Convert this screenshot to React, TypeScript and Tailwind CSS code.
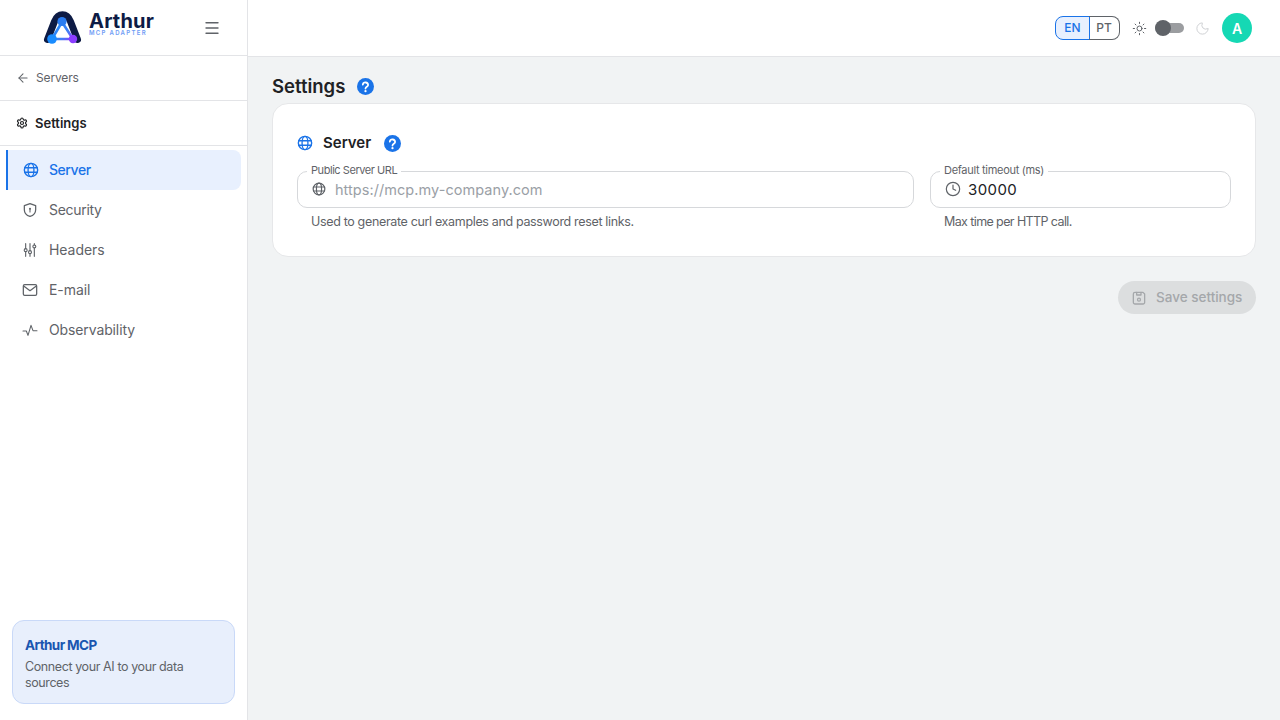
import React from "react";
import { ArrowLeft, Settings, Menu, Sun, Moon, Clock } from "lucide-react";

function Help({ className }: { className: string }) {
  return (
    <svg viewBox="0 0 24 24" className={className} aria-hidden="true">
      <circle cx="12" cy="12" r="12" fill="#1a73e8" />
      <path d="M8.2 9.3a3.8 3.8 0 0 1 7.5.6c0 2.4-3.7 2.7-3.7 5" fill="none" stroke="#fff" strokeWidth="2.5" strokeLinecap="round" />
      <circle cx="12" cy="18.6" r="1.6" fill="#fff" />
    </svg>
  );
}

function Logo() {
  return (
    <svg viewBox="0 0 46 40" className="w-[46px] h-[40px] shrink-0" aria-hidden="true">
      <defs>
        <linearGradient id="tri" gradientUnits="userSpaceOnUse" x1="14" y1="14" x2="33" y2="31">
          <stop offset="0" stopColor="#1a8cff" />
          <stop offset="0.65" stopColor="#3f7ff5" />
          <stop offset="1" stopColor="#8b3dff" />
        </linearGradient>
      </defs>
      <path d="M7.5 31.5 14.500 13.500C17 7.500 19.500 6.800 22.500 6.800s5.500 .7 8 6.700l7 18" fill="none" stroke="#0d1b45" strokeWidth="7" strokeLinecap="round" />
      <path d="M22 14 12 31h21Z" fill="#fff" stroke="url(#tri)" strokeWidth="2.600" strokeLinejoin="round" />
      <circle cx="22" cy="13.500" r="4.600" fill="#2a7df2" />
      <circle cx="12" cy="31" r="4.800" fill="#1a8cff" />
      <circle cx="33" cy="31" r="4.200" fill="#8b3dff" />
    </svg>
  );
}

function Ico({ children, className = "w-[16px] h-[16px]" }: { children: React.ReactNode; className?: string }) {
  return (
    <svg viewBox="0 0 24 24" className={className} fill="none" stroke="currentColor" strokeWidth="1.9" strokeLinecap="round" strokeLinejoin="round" aria-hidden="true">
      {children}
    </svg>
  );
}

function GlobeIcon({ className = "w-[16px] h-[16px]" }: { className?: string }) {
  return (
    <Ico className={className}>
      <circle cx="12" cy="12" r="10" strokeWidth="2.1" />
      <ellipse cx="12" cy="12" rx="4.4" ry="10" strokeWidth="2" />
      <path d="M2.6 8.6h18.8M2.6 15.4h18.8" strokeWidth="2" />
    </Ico>
  );
}

const nav = [
  { label: "Server", active: true, track: "tracking-[-0.45px]", icon: <GlobeIcon /> },
  {
    label: "Security",
    track: "tracking-[-0.3px]",
    icon: (
      <Ico>
        <path d="M12 2.500 20.500 5.500v6c0 5-3.600 8.600-8.500 10.200C7.100 20.100 3.500 16.500 3.500 11.500v-6Z" />
        <circle cx="12" cy="10" r="1.500" fill="currentColor" stroke="none" />
        <path d="M12 10.500v4.500" strokeWidth="1.600" />
      </Ico>
    ),
  },
  {
    label: "Headers",
    track: "tracking-[-0.05px]",
    icon: (
      <Ico>
        <path d="M5.500 2.500v7.500M5.500 14.500v7M12 2.500v10.500M12 17.500v4M18.500 2.500v2M18.500 9v12.500" strokeWidth="1.700" />
        <circle cx="5.500" cy="12.200" r="2.200" strokeWidth="1.700" />
        <circle cx="12" cy="15.200" r="2.200" strokeWidth="1.700" />
        <circle cx="18.500" cy="6.700" r="2.200" strokeWidth="1.700" />
      </Ico>
    ),
  },
  {
    label: "E-mail",
    track: "tracking-[-0.05px]",
    icon: (
      <Ico>
        <rect x="2" y="4" width="20" height="16" rx="2" />
        <path d="m2.500 6 9.500 7 9.500-7" />
      </Ico>
    ),
  },
  {
    label: "Observability",
    track: "tracking-[-0.12px]",
    icon: (
      <Ico>
        <path d="M1.500 13.500H6.500l2.500 6.500L13.500 5l3 8h6" strokeWidth="1.600" />
      </Ico>
    ),
  },
];

function Field({ label, labelTrack, icon, value, placeholder, help, helpTrack, className }: { label: string; labelTrack: string; icon: React.ReactNode; value?: string; placeholder?: string; help: string; helpTrack: string; className: string }) {
  return (
    <div className={className}>
      <div className="relative h-[37px] rounded-[10px] border border-[#d6d8db] bg-white flex items-center pl-[14px] gap-[9px]">
        <span className={`absolute left-[9px] -top-[8px] bg-white px-[4px] text-[11px] leading-[13px] text-[#5f6368] whitespace-nowrap ${labelTrack}`}>{label}</span>
        <span className="text-[#5f6368] flex -mt-[1px]">{icon}</span>
        {value ? (
          <span className="text-[15px] leading-[20px] mt-[1px] text-[#202124] tracking-[0.4px]">{value}</span>
        ) : (
          <span className="text-[14.5px] text-[#9aa0a6] tracking-[0.05px]">{placeholder}</span>
        )}
      </div>
      <p className={`mt-[6px] pl-[14px] text-[12.5px] leading-[16px] text-[#5f6368] ${helpTrack}`}>{help}</p>
    </div>
  );
}

export default function App() {
  return (
    <div className="flex h-[720px] w-[1280px] overflow-hidden bg-[#f1f3f4] text-[#202124]" style={{ fontFamily: "Inter, 'Noto Sans', sans-serif" }}>
      <aside className="w-[248px] shrink-0 bg-white border-r border-[#e3e4e7] flex flex-col">
        <div className="h-[56px] shrink-0 border-b border-[#e3e4e7] flex items-center pl-[40px] pr-[26px]">
          <Logo />
          <div className="ml-[3px] flex flex-col -mt-[6px]">
            <span className="text-[20px] leading-[15px] font-bold text-[#0d1b45] tracking-[0.2px]">Arthur</span>
            <span className="text-[6px] leading-[7px] font-semibold text-[#6f9cf5] tracking-[1.3px]">MCP ADAPTER</span>
          </div>
          <Menu className="ml-auto w-[18px] h-[18px] text-[#5f6368]" strokeWidth={1.8} />
        </div>
        <div className="h-[45px] shrink-0 border-b border-[#e3e4e7] flex items-center pl-[16px] gap-[6px] text-[#5f6368]">
          <ArrowLeft className="w-[14px] h-[14px]" strokeWidth={1.8} />
          <span className="text-[12px] tracking-[-0.15px]">Servers</span>
        </div>
        <div className="h-[45px] shrink-0 border-b border-[#e3e4e7] flex items-center pl-[16px] gap-[7px]">
          <Settings className="w-[12px] h-[12px]" strokeWidth={2.4} />
          <span className="text-[13px] leading-[20px] font-semibold">Settings</span>
        </div>
        <nav className="pt-[4px] pl-[6px] pr-[6px] flex flex-col">
          {nav.map((n) => (
            <div key={n.label} className={n.active ? "h-[40px] flex items-center pl-[15px] gap-[10px] text-[14px] bg-[#e8f0fe] text-[#1a73e8] border-l-2 border-[#1a73e8] rounded-r-[8px] font-medium" : "h-[40px] flex items-center pl-[16px] gap-[11px] text-[14px] text-[#5f6368]"}>
              {n.icon}
              <span className={`leading-[20px] -mt-[1px] ${n.track}`}>{n.label}</span>
            </div>
          ))}
        </nav>
        <div className="mt-auto mx-[12px] mb-[16px] h-[84px] rounded-[12px] border border-[#c9d9f8] bg-[#e8effc] px-[12px] pt-[15px]">
          <div className="text-[13.500px] leading-[18px] font-bold text-[#1a56b0] tracking-[-0.6px]">Arthur MCP</div>
          <div className="mt-[5px] text-[12.5px] leading-[16px] text-[#5f6368] tracking-[-0.4px]">Connect your AI to your data sources</div>
        </div>
      </aside>
      <div className="flex-1 flex flex-col min-w-0">
        <header className="h-[57px] shrink-0 bg-white border-b border-[#e3e4e7] flex items-center justify-end pr-[28px]">
          <div className="flex h-[24px] text-[12px] font-medium">
            <span className="w-[35px] flex items-center justify-center rounded-l-[8px] border border-[#1a73e8] bg-[#e8f0fe] text-[#1a73e8]">EN</span>
            <span className="w-[31px] -ml-px flex items-center justify-center rounded-r-[8px] border border-[#5f6368] border-l-0 text-[#5f6368]">PT</span>
          </div>
          <Sun className="ml-[12px] w-[15px] h-[15px] text-[#5f6368]" strokeWidth={1.6} />
          <div className="relative ml-[8px] w-[29px] h-[10px] rounded-full bg-[#9b9da0]">
            <span className="absolute left-0 -top-[3px] w-[16px] h-[16px] rounded-full bg-[#5f6368]" />
          </div>
          <Moon className="ml-[11px] w-[15px] h-[15px] text-[#d0d2d5]" strokeWidth={1.6} />
          <div className="ml-[12px] w-[30px] h-[30px] rounded-full bg-[#15d8b4] flex items-center justify-center text-white text-[14px] font-semibold">A</div>
        </header>
        <main className="flex-1 px-[24px] pt-[17px]">
          <div className="flex items-center h-[24px] gap-[12px]">
            <h1 className="text-[18.500px] leading-[24px] font-semibold text-[#202124]">Settings</h1>
            <Help className="w-[17px] h-[17px]" />
          </div>
          <section className="mt-[5px] h-[154px] rounded-[16px] border border-[#e6e7e9] bg-white px-[24px] pt-[29px]">
            <div className="flex items-center h-[20px]">
              <GlobeIcon className="w-[16px] h-[16px] text-[#1a73e8]" />
              <h2 className="ml-[10px] text-[15px] font-semibold tracking-[0px]">Server</h2>
              <Help className="ml-[13px] w-[17px] h-[17px]" />
            </div>
            <div className="mt-[18px] flex gap-[16px]">
              <Field className="w-[617px]" labelTrack="tracking-[-0.45px]" label="Public Server URL" icon={<GlobeIcon className="w-[14px] h-[14px]" />} placeholder="https://mcp.my-company.com" help="Used to generate curl examples and password reset links." helpTrack="tracking-[-0.34px]" />
              <Field className="w-[301px]" labelTrack="tracking-[-0.3px]" label="Default timeout (ms)" icon={<Clock className="w-[16px] h-[16px] -mr-[2px]" strokeWidth={1.8} />} value="30000" help="Max time per HTTP call." helpTrack="tracking-[-0.6px]" />
            </div>
          </section>
          <div className="mt-[24px] flex justify-end">
            <div className="h-[33px] w-[138px] rounded-full bg-[#dcdedf] flex items-center pl-[13px] gap-[9px] text-[#a4a7aa]">
              <Ico>
                <path d="M6 3.500h12l2.500 2.500v12.500a2.500 2.500 0 0 1-2.500 2.500H6a2.500 2.500 0 0 1-2.500-2.500v-12.500A2.500 2.500 0 0 1 6 3.500Z" />
                <path d="M8.500 3.500v4h6.500v-4" />
                <circle cx="12" cy="14.500" r="2.200" />
              </Ico>
              <span className="text-[13.500px] font-medium -mt-[1px]">Save settings</span>
            </div>
          </div>
        </main>
      </div>
    </div>
  );
}
